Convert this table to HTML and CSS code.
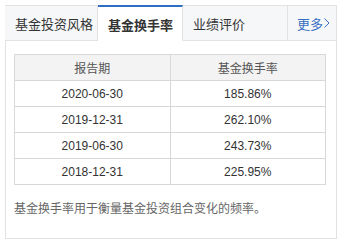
FILE: index.html
```html
<!DOCTYPE html>
<html lang="zh-CN">
<head>
<meta charset="utf-8">
<link rel="stylesheet" href="styles.css">
</head>
<body>
<div class="widget">
  <div class="tabs">
    <div class="tab tab-1">基金投资风格</div>
    <div class="tab tab-2 active">基金换手率</div>
    <div class="tab tab-3">业绩评价</div>
    <div class="tab more">更多<svg class="chev" width="6" height="10" viewBox="0 0 6 10"><path d="M0.5 0.5 L5 5 L0.5 9.5" fill="none" stroke="#3a6fc2" stroke-width="1"/></svg></div>
  </div>
  <div class="panel">
    <table class="grid">
      <thead>
        <tr><th>报告期</th><th>基金换手率</th></tr>
      </thead>
      <tbody>
        <tr><td>2020-06-30</td><td>185.86%</td></tr>
        <tr><td>2019-12-31</td><td>262.10%</td></tr>
        <tr><td>2019-06-30</td><td>243.73%</td></tr>
        <tr><td>2018-12-31</td><td>225.95%</td></tr>
      </tbody>
    </table>
    <p class="note">基金换手率用于衡量基金投资组合变化的频率。</p>
  </div>
</div>
</body>
</html>
```
FILE: styles.css
```css
* { box-sizing: border-box; }
html, body { margin: 0; padding: 0; background: #fff; }
body {
  font-family: "Liberation Sans", "Noto Sans CJK SC", sans-serif;
  color: #333;
}
.widget {
  margin: 5px 0 0 5px;
  width: 332px;
}
.tabs {
  display: flex;
  height: 36px;
}
.tab {
  display: flex;
  align-items: center;
  height: 36px;
  padding: 0 0 0 10px;
  font-size: 13px;
  color: #333;
  background: #f6f7f9;
  border-top: 1px solid #e2e2e2;
  border-bottom: 1px solid #e2e2e2;
  border-right: 1px solid #e2e2e2;
  white-space: nowrap;
}
.tab-1 { width: 93px; }
.tab-2 { width: 85px; }
.tab-3 { width: 105px; }
.more { width: 49px; padding-left: 9px; color: #3a6fc2; }
.chev { margin-left: 1px; }
.active {
  background: #fff;
  border-top: 2px solid #2f6fc3;
  border-bottom: 1px solid #fff;
  font-weight: bold;
  padding-top: 1px;
}
.panel {
  border: 1px solid #e2e2e2;
  border-top: none;
  padding: 13px 10px 20px 8px;
}
.grid {
  width: 312px;
  border-collapse: collapse;
  font-size: 12px;
}
.grid th, .grid td {
  border: 1px solid #d8d8d8;
  height: 26px;
  padding: 0;
  text-align: center;
  width: 50%;
}
.grid th {
  background: #f3f3f3;
  font-weight: normal;
  color: #555;
}
.grid td { color: #333; }
.note {
  margin: 15px 0 0 0;
  font-size: 12px;
  line-height: 18px;
  color: #666;
}
```
